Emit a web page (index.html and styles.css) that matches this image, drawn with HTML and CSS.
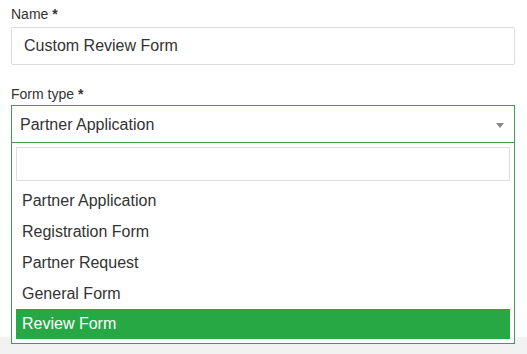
FILE: index.html
```html
<!DOCTYPE html>
<html lang="en">
<head>
    <meta charset="UTF-8">
    <meta name="viewport" content="width=device-width, initial-scale=1.0">
    <title>Custom Review Form</title>
    <link rel="stylesheet" href="styles.css">
</head>
<body>
    <div class="form-body">
        <div class="field">
            <label class="field-label">Name <span class="req">*</span></label>
            <input class="text-input" type="text" value="Custom Review Form">
        </div>

        <div class="field">
            <label class="field-label">Form type <span class="req">*</span></label>
            <div class="select-wrap">
                <div class="select-box">
                    <span class="select-value">Partner Application</span>
                    <span class="select-arrow"></span>
                </div>
                <div class="select-dropdown">
                    <div class="search-wrap">
                        <input class="search-input" type="text">
                    </div>
                    <ul class="options">
                        <li class="option">Partner Application</li>
                        <li class="option">Registration Form</li>
                        <li class="option">Partner Request</li>
                        <li class="option">General Form</li>
                        <li class="option highlighted">Review Form</li>
                    </ul>
                </div>
            </div>
        </div>
    </div>
    <div class="form-footer"></div>
</body>
</html>
```

FILE: styles.css
```css
body {
    font-family: "Liberation Sans", Arial, sans-serif;
    margin: 0;
    color: #333;
    background: white;
}
.form-body {
    padding: 5px 12px 0 11px;
    height: 332px;
}
.field {
    margin-bottom: 20px;
}
.field-label {
    display: block;
    font-size: 14px;
    line-height: 18px;
    margin-bottom: 4px;
}
.field + .field .field-label {
    margin-bottom: 2px;
}
.req {
    font-weight: bold;
}
.text-input {
    box-sizing: border-box;
    width: 100%;
    height: 38px;
    padding: 0 12px;
    border: 1px solid #dcdcdc;
    border-radius: 2px;
    font-family: inherit;
    font-size: 16px;
    color: #333;
    outline: none;
}

/* select */
.select-wrap {
    position: relative;
}
.select-box {
    box-sizing: border-box;
    height: 38px;
    border: 1px solid #3f9e4f;
    display: flex;
    align-items: center;
    padding: 2px 8px 0;
    font-size: 16px;
}
.select-value {
    flex: 1;
}
.select-arrow {
    width: 0;
    height: 0;
    border-left: 4px solid transparent;
    border-right: 4px solid transparent;
    border-top: 5px solid #888;
    margin-right: 2px;
}
.select-dropdown {
    position: absolute;
    top: 37px;
    left: 0;
    right: 0;
    background: white;
    border: 1px solid #3f9e4f;
    padding: 4px;
    z-index: 10;
}
.search-input {
    box-sizing: border-box;
    width: 100%;
    height: 34px;
    border: 1px solid #dedede;
    outline: none;
    display: block;
}
.options {
    list-style: none;
    margin: 4px 0 0;
    padding: 0;
}
.option {
    height: 31px;
    line-height: 31px;
    padding: 0 6px;
    font-size: 16px;
    color: #333;
}
.option.highlighted {
    background: #28a745;
    color: white;
    height: 30px;
    line-height: 30px;
}

.form-footer {
    height: 22px;
    background: #f2f2f2;
}
```
